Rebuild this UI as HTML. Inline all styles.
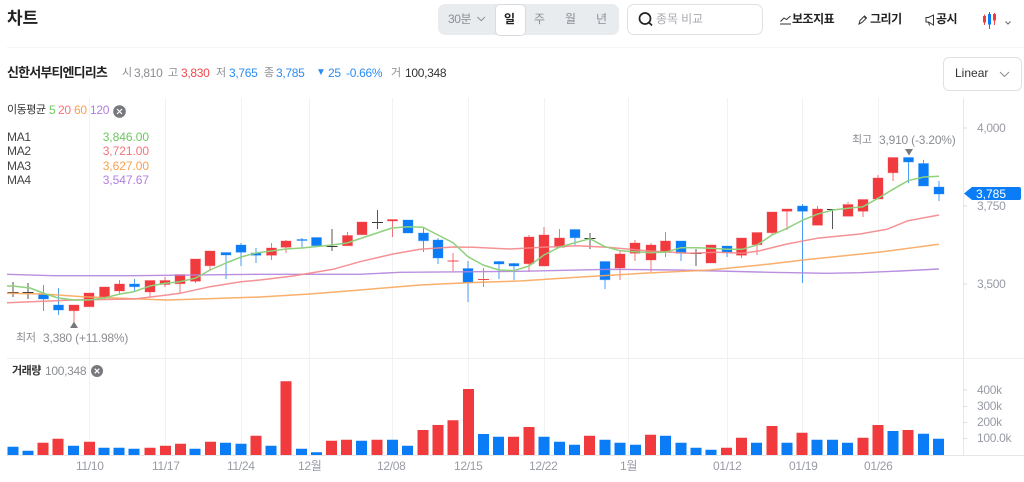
<!DOCTYPE html>
<html lang="ko">
<head>
<meta charset="utf-8">
<title>차트</title>
<style>
html,body{margin:0;padding:0;background:#fff}
body{width:1024px;height:482px;overflow:hidden;position:relative;font-family:"Liberation Sans","Noto Sans CJK KR",sans-serif;color:#222}
.a{position:absolute;white-space:nowrap;line-height:14px;font-size:12px;letter-spacing:-.3px}
.g{color:#8b8d93}.r{color:#f0474c}.b{color:#2b8cf5}
.seg{position:absolute;left:438px;top:4px;width:181px;height:31px;background:#e9ecef;border-radius:7px}
.day{position:absolute;left:495px;top:4px;width:29px;height:30px;background:#fff;border:1px solid #d8dbdf;border-radius:5px}
.search{position:absolute;left:627px;top:4px;width:134px;height:29px;background:#fff;border:1px solid #dfe1e5;border-radius:7px}
.lin{position:absolute;left:943px;top:57px;width:77px;height:32px;background:#fff;border:1px solid #dfe1e5;border-radius:6px}
.t{color:#999ba5}
svg{position:absolute;left:0;top:0}
</style>
</head>
<body>
<div class="seg"></div><div class="day"></div><div class="search"></div><div class="lin"></div>

<svg width="1024" height="482" viewBox="0 0 1024 482" fill="none">
<!-- grid -->
<path d="M7 47.5H1024" stroke="#f3f4f6"/>
<path d="M89.5 98V455M165.5 98V455M241.5 98V455M309.5 98V455M392.5 98V455M468.5 98V455M544.5 98V455M628.5 98V455M727.5 98V455M802.5 98V455M878.5 98V455" stroke="#f1f2f4"/>
<path d="M963.5 98V455" stroke="#e6e7ea"/>
<path d="M7 358.5H1024" stroke="#eeeff1"/>
<path d="M7 455.5H1024" stroke="#e6e7ea"/>
<path d="M963 128H967M963 206H967M963 284H967M963 390H967M963 406.5H967M963 422.5H967M963 438.5H967" stroke="#dcdde1"/>

<!-- wicks -->
<path stroke="#f0474c" stroke-opacity=".75" d="M74 310V322M104.5 297V300M119.5 280V294M150 292V297M165 277V287M180 283V294M195.5 281V283M210 265V271M271.5 243V260M286 240V253M347.5 232V236M392.5 220V237M453 253V271M483.5 268V287M529 235V272M544 227V235M559.5 229V238M620 250V280M635 240V261M651 243V272M665.5 232V257M741.5 255V258M757 244V255M772 232V235M787 211V230M817.5 206V209M848 202V204M863 211V217M878 175V178M893 172V181"/>
<path stroke="#2b8cf5" stroke-opacity=".85" d="M43.5 285V311M58.5 288V315M134.5 279V291M226 255V279M241 243V266M256 248V263M302 238V248M316.5 245V247M423.5 228V252M438 238V264M468 261V302M499 261V279M514 263V280M575 237V245M605 279V289M681 253V261M727 252V257M802.5 204V283M908.5 162V183M923.5 160V164M939 181V201"/>
<path stroke="#3a3a3a" stroke-opacity=".85" d="M13 282V297M28 283V299M332 229V251M377.5 210V229M590 233V249M696 249V266M832.5 209V229"/>
<path stroke="#3a3a3a" d="M7.5 292.5H18.5M22.5 292.5H33.5M326.500 246.500H337.500M372 222.500H383M584.500 238.500H595.500M690.500 253.500H701.500M827 209.500H838"/>
<path stroke="#f0474c" d="M447.500 261H458.500M478 279.500H489"/>

<!-- bodies -->
<path fill="#f03a3e" stroke="#f0474c" stroke-opacity=".35" d="M69 305h10v5.700h-10zM84 293h10v13.700h-10zM99.500 287h10v10.700h-10zM114.500 284h10v7h-10zM145 280.500h10v11.500h-10zM160 280.500h10v4h-10zM175 274.500h10v9.200h-10zM190.500 259h10v22.300h-10zM205 251h10v14.700h-10zM266.500 248h10v7.300h-10zM281 241h10v6.300h-10zM342.500 235.500h10v10.200h-10zM357 222h10v12.700h-10zM387.500 219.500h10v1.500h-10zM524 237h10v26.700h-10zM539 235h10v31h-10zM554.500 238h10v9.300h-10zM615 254h10v14h-10zM630 243h10v10.300h-10zM646 245h10v15h-10zM660.500 241h10v11.300h-10zM706 245h10v18h-10zM736.500 238h10v17.300h-10zM752 232.500h10v12.200h-10zM767 212h10v20.700h-10zM782 209h10v2.300h-10zM812.500 209h10v16.300h-10zM843 204.500h10v11.800h-10zM858 199.500h10v11.800h-10zM873 178h10v21h-10zM888 157.500h10v15.200h-10z"/>
<path fill="#0a7cf5" stroke="#2b8cf5" stroke-opacity=".35" d="M38.500 294.500h10v4.500h-10zM53.500 305h10v5h-10zM129.500 284h10v2.700h-10zM221 252.500h10v2.500h-10zM236 245h10v7.300h-10zM251 253h10v2.300h-10zM297 239.500h10v1h-10zM311.500 237.500h10v8.200h-10zM403 220h10v13h-10zM418.500 233h10v7.700h-10zM433 240h10v18h-10zM463 268.500h10v14.200h-10zM494 261.500h10v2.500h-10zM509 263.500h10v2.500h-10zM570 229.500h10v8.200h-10zM600 261.500h10v18.200h-10zM676 241h10v12.300h-10zM722 246h10v6.300h-10zM797.500 206h10v5.300h-10zM903.500 157.500h10v4.500h-10zM918.500 163.500h10v22.500h-10zM934 187h10v7h-10z"/>

<!-- MA lines -->
<polyline stroke="#b283dd" stroke-opacity=".9" stroke-width="1.4" stroke-linejoin="round" points="7,274.300 53,275.700 133,275.700 260,274.300 360,274.300 400,272.300 520,271.300 610,269.300 677,270 770,272.300 827,273.300 860,272.700 900,271 939,269"/>
<polyline stroke="#f9a65c" stroke-width="1.5" stroke-opacity=".9" stroke-linejoin="round" points="7,293.300 43,294 83,296.700 133,298.700 167,300 207,298.700 260,297 310,294 360,290 420,285 467,282.700 520,281 577,277.300 643,273.300 710,270 770,264 803,260 878,252.300 939,244.300"/>
<polyline stroke="#f5868a" stroke-width="1.5" stroke-opacity=".9" stroke-linejoin="round" points="7,302.700 74,300 134,299 165,295.300 180,293.300 210,286.700 241,281.700 260,280 293,276 333,269.300 360,261.700 393,254 420,249.300 453,247 473,247.300 510,249 543,247.300 577,245.700 607,247.300 650,251 690,253.300 717,252.300 743,253.300 760,250.700 787,244 817,238.300 860,234 887,229.300 908,220.700 939,215"/>
<polyline stroke="#8fd17c" stroke-width="1.5" stroke-linejoin="round" points="7,286 13,286 30,288 43,293 58,298 74,300 89,300 104,298 120,294 134,291.700 150,286 165,283.300 180,281.700 196,278 210,270 226,263 241,257 256,253 286,249 302,248 332,245 347,243 362,238 377,233 392,228 408,226.700 423,227.300 438,235 453,242.700 468,256.700 483,265 499,270 514,270.700 529,266 544,255 559,247.300 575,242.700 590,238.700 605,246.700 620,250.700 635,251.700 651,252.700 666,252 681,247.700 696,247.700 711,248.300 727,249.300 742,249.300 757,245 772,235 787,228.300 803,220 817,214.300 833,210 848,208.300 863,206.700 878,198.300 893,189.300 908,180.700 924,177 939,176.300"/>

<!-- hi / lo markers -->
<path fill="#77787d" d="M74 321.500L78 328H70zM909 155.500L905 149H913z"/>

<!-- volume -->
<path fill="#f03a3e" d="M37.500 442.700h11V455h-11zM52.500 438.700h11V455h-11zM84 441.700h11V455h-11zM144.500 447.700h11V455h-11zM160 445.700h11V455h-11zM175 443.700h11V455h-11zM205 441.700h11V455h-11zM250.500 435.700h11V455h-11zM280.500 381.300h11V455h-11zM326 440.700h11V455h-11zM341 439.700h11V455h-11zM371.500 439.700h11V455h-11zM417.500 430h11V455h-11zM432.500 425h11V455h-11zM447.500 420.300h11V455h-11zM463 389h11V455h-11zM508 436.700h11V455h-11zM523.500 427h11V455h-11zM584 435.700h11V455h-11zM645 434.700h11V455h-11zM721 447.700h11V455h-11zM736 437.700h11V455h-11zM766.500 426h11V455h-11zM796.500 432.700h11V455h-11zM857.500 437.700h11V455h-11zM872.500 425h11V455h-11zM902.500 430h11V455h-11z"/>
<path fill="#0a7cf5" d="M7.500 446.700h11V455h-11zM22.500 450.700h11V455h-11zM68 445.700h11V455h-11zM98.500 447.700h11V455h-11zM113.500 447.700h11V455h-11zM128.500 448.700h11V455h-11zM189.500 448.700h11V455h-11zM220 442.700h11V455h-11zM235.500 443.700h11V455h-11zM265.500 445.700h11V455h-11zM296 448.700h11V455h-11zM311 452.300h11V455h-11zM356 440.700h11V455h-11zM387 439.700h11V455h-11zM402 445.700h11V455h-11zM478 434h11V455h-11zM493 436.700h11V455h-11zM538.500 436.700h11V455h-11zM554 441.700h11V455h-11zM569 444.700h11V455h-11zM599.500 439.700h11V455h-11zM614.500 442.700h11V455h-11zM630 444.700h11V455h-11zM660 435.700h11V455h-11zM675.500 442.700h11V455h-11zM690.500 447.700h11V455h-11zM705.500 449.700h11V455h-11zM751 442.700h11V455h-11zM781.500 442.700h11V455h-11zM811.500 439.700h11V455h-11zM827 439.700h11V455h-11zM842 442.700h11V455h-11zM887.500 431h11V455h-11zM918 433.700h11V455h-11zM933 438.700h11V455h-11z"/>

<!-- price tag -->
<path fill="#0a7cf5" d="M964 193.500L972 187H1019a2 2 0 0 1 2 2V198a2 2 0 0 1-2 2H972z"/>

<!-- close icons -->
<circle cx="119.500" cy="111.500" r="6.300" fill="#77787d"/>
<path d="M117 109l5 5M122 109l-5 5" stroke="#fff" stroke-width="1.200"/>
<circle cx="97" cy="371" r="6" fill="#77787d"/>
<path d="M94.700 368.700l4.600 4.600M99.300 368.700l-4.600 4.600" stroke="#fff" stroke-width="1.200"/>

<!-- chevrons -->
<path d="M477.500 17l3.700 3.700 3.700-3.700" stroke="#8b8d93" stroke-width="1"/>
<path d="M1000 72l4.500 4.500 4.500-4.500" stroke="#8b8d93" stroke-width="1"/>
<path d="M1005.500 21.500l2.500 2.500 2.500-2.500" stroke="#666" stroke-width="1"/>

<!-- search icon -->
<circle cx="645" cy="18.500" r="5.500" stroke="#222" stroke-width="1.700"/>
<path d="M649 22.500l3 3" stroke="#222" stroke-width="1.700"/>

<!-- tool icons -->
<path d="M780 24H791M780.500 21.500l3.500-3.500 2.500 1.500 4-3.500" stroke="#333" stroke-width="1"/>
<path d="M859 24l1-3.500 4.500-4.500 2 2-4.500 4.500zM864 16.500l2 2" stroke="#333" stroke-width="1"/>
<path d="M926 17.500V22H928.500L933.500 25V15L928.500 17.500ZM928.500 22L929.500 25.500" stroke="#333" stroke-width="1"/>

<!-- candle icon -->
<path d="M984.500 14.500V25" stroke="#f0474c"/><path fill="#f03a3e" d="M983 16h3v6.500h-3z"/>
<path d="M989.500 12V29" stroke="#0a7cf5"/><path fill="#0a7cf5" d="M988 14h3v10.500h-3z"/>
<path d="M994.500 13V25" stroke="#f0474c"/><path fill="#f03a3e" d="M993 14h3v6.500h-3z"/>
</svg>

<!-- header -->
<div class="a" style="left:7px;top:8px;font-size:17px;line-height:22px;font-weight:700;letter-spacing:-.2px;color:#222">차트</div>
<div class="a g" style="left:448px;top:12px;letter-spacing:-.4px">30분</div>
<div class="a" style="left:504px;top:12px;font-weight:700;color:#222">일</div>
<div class="a g" style="left:534px;top:12px">주</div>
<div class="a g" style="left:565px;top:12px">월</div>
<div class="a g" style="left:596px;top:12px">년</div>
<div class="a" style="left:656px;top:12px;color:#a9abb0;font-size:12px;letter-spacing:-.1px">종목 비교</div>
<div class="a" style="left:792px;top:12px;font-weight:700;color:#222;letter-spacing:-.5px">보조지표</div>
<div class="a" style="left:870px;top:12px;font-weight:700;color:#222;letter-spacing:-.5px">그리기</div>
<div class="a" style="left:936px;top:12px;font-weight:700;color:#222;letter-spacing:-.5px">공시</div>

<!-- stock info -->
<div class="a" style="left:7px;top:66px;font-size:13px;font-weight:700;color:#222;letter-spacing:-.85px">신한서부티엔디리츠</div>
<div class="a g" style="left:122px;top:66px;font-size:11px">시</div>
<div class="a g" style="left:134px;top:66px">3,810</div>
<div class="a g" style="left:168px;top:66px;font-size:11px">고</div>
<div class="a r" style="left:181px;top:66px">3,830</div>
<div class="a g" style="left:216px;top:66px;font-size:11px">저</div>
<div class="a b" style="left:229px;top:66px">3,765</div>
<div class="a g" style="left:264px;top:66px;font-size:11px">종</div>
<div class="a b" style="left:276px;top:66px">3,785</div>
<div class="a b" style="left:316px;top:66px;font-size:10px">▼</div>
<div class="a b" style="left:328px;top:66px">25</div>
<div class="a b" style="left:346px;top:66px">-0.66%</div>
<div class="a g" style="left:391px;top:66px;font-size:11px">거</div>
<div class="a" style="left:405px;top:66px;color:#333">100,348</div>
<div class="a" style="left:955px;top:66px;color:#333;letter-spacing:0">Linear</div>

<!-- MA legend -->
<div class="a" style="left:7px;top:103px;font-size:11px;color:#333;letter-spacing:-.5px">이동평균</div>
<div class="a" style="left:49px;top:103px;color:#6cc960">5</div>
<div class="a" style="left:58px;top:103px;color:#f5737a">20</div>
<div class="a" style="left:74px;top:103px;color:#f9a04e">60</div>
<div class="a" style="left:90px;top:103px;color:#b07fe0">120</div>
<div class="a" style="left:7px;top:130px;color:#444">MA1</div>
<div class="a" style="left:7px;top:144px;color:#444">MA2</div>
<div class="a" style="left:7px;top:159px;color:#444">MA3</div>
<div class="a" style="left:7px;top:173px;color:#444">MA4</div>
<div class="a" style="right:875px;top:130px;color:#6cc960;letter-spacing:-.05px">3,846.00</div>
<div class="a" style="right:875px;top:144px;color:#f5737a;letter-spacing:-.05px">3,721.00</div>
<div class="a" style="right:875px;top:159px;color:#f9a04e;letter-spacing:-.05px">3,627.00</div>
<div class="a" style="right:875px;top:173px;color:#b07fe0;letter-spacing:-.05px">3,547.67</div>

<!-- hi/lo labels -->
<div class="a g" style="left:16px;top:331px;font-size:11px">최저</div>
<div class="a g" style="left:43px;top:331px;letter-spacing:-.2px">3,380 (+11.98%)</div>
<div class="a g" style="left:852px;top:133px;font-size:11px">최고</div>
<div class="a g" style="left:879px;top:133px;letter-spacing:-.2px">3,910 (-3.20%)</div>

<!-- price axis -->
<div class="a t" style="left:977px;top:121px">4,000</div>
<div class="a t" style="left:977px;top:199px">3,750</div>
<div class="a t" style="left:977px;top:277px">3,500</div>
<div class="a" style="left:976px;top:187px;color:#fff;font-weight:400;letter-spacing:0">3,785</div>

<!-- volume labels -->
<div class="a" style="left:12px;top:364px;font-size:11px;font-weight:700;color:#333;letter-spacing:-.5px">거래량</div>
<div class="a g" style="left:45px;top:364px">100,348</div>
<div class="a t" style="left:977px;top:383px">400k</div>
<div class="a t" style="left:977px;top:399px">300k</div>
<div class="a t" style="left:977px;top:415px">200k</div>
<div class="a t" style="left:977px;top:431px">100.0k</div>

<!-- x axis -->
<div class="a t" style="left:76px;top:459px">11/10</div>
<div class="a t" style="left:152px;top:459px">11/17</div>
<div class="a t" style="left:227px;top:459px">11/24</div>
<div class="a t" style="left:298px;top:459px">12월</div>
<div class="a t" style="left:377px;top:459px">12/08</div>
<div class="a t" style="left:454px;top:459px">12/15</div>
<div class="a t" style="left:529px;top:459px">12/22</div>
<div class="a t" style="left:620px;top:459px">1월</div>
<div class="a t" style="left:713px;top:459px">01/12</div>
<div class="a t" style="left:789px;top:459px">01/19</div>
<div class="a t" style="left:864px;top:459px">01/26</div>
</body>
</html>
